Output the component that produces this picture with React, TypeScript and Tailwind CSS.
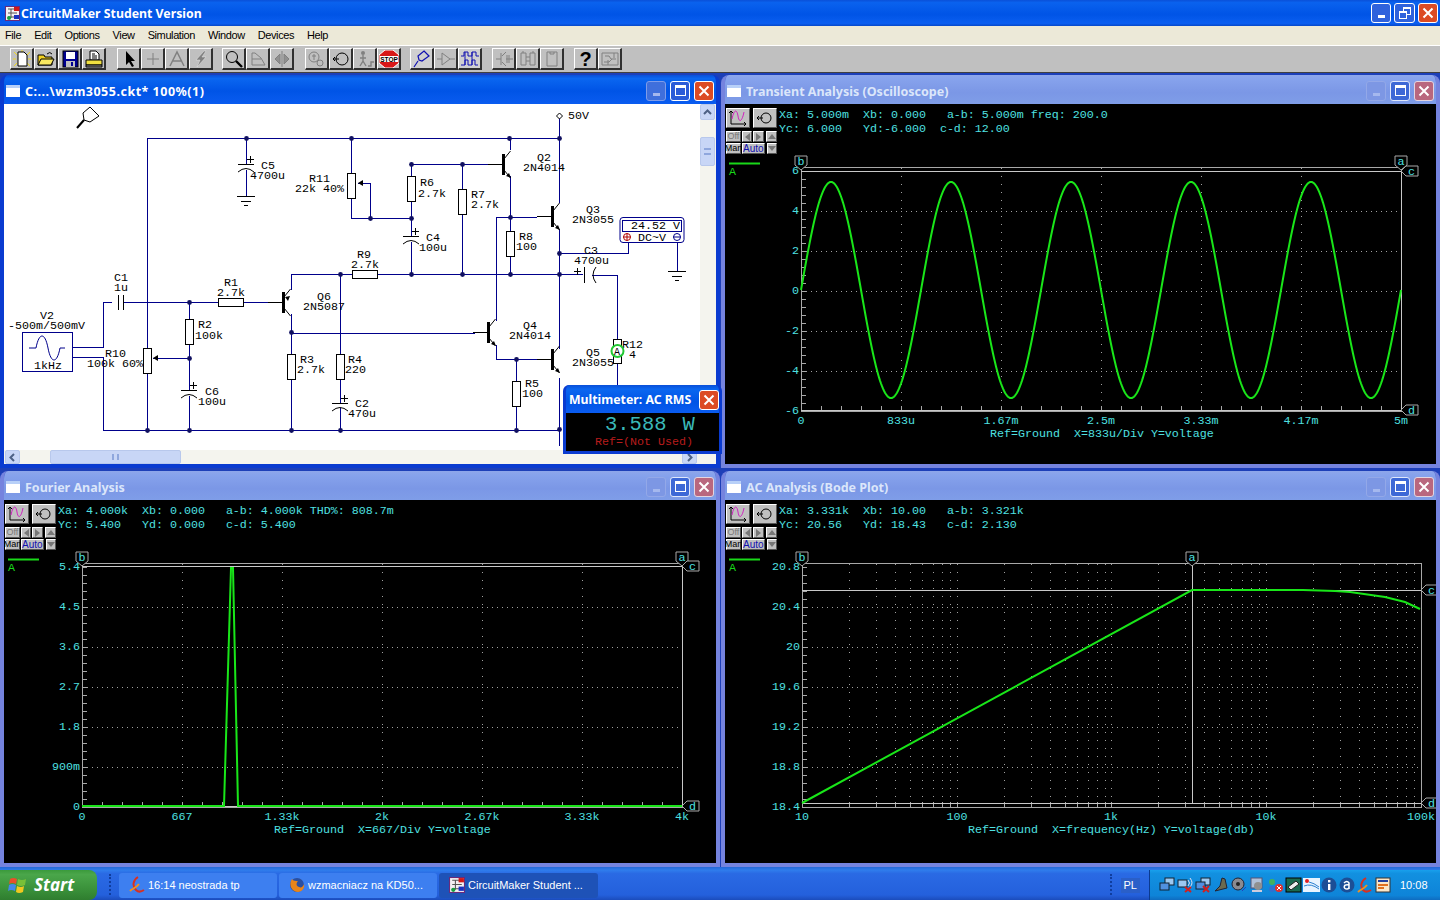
import React from 'react';

type Label = [number, number, string];

const WIRE = '#00008b';

// schematic, in page coordinates
const wires: string[] = [
  '147,348 147,138 559,138',
  '246,138 246,164', '246,170 246,196',
  '351,138 351,173', '351,197 351,218 411,218', '358,183 370,183 370,218',
  '411,164 488,164', '411,164 411,176', '411,201 411,236', '411,242 411,274',
  '462,164 462,190', '462,214 462,274',
  '510,138 510,150', '510,176 510,231', '510,256 510,274',
  '496,321 496,217 537,217', '559,116 559,203', '559,229 559,349', '559,378 559,446',
  '559,253 628,253 628,243',
  '377,274 583,274', '592,275 617,275 617,339', '617,363 617,386',
  '475,333 291,333', '496,345 496,359 537,359',
  '516,359 516,381', '516,406 516,430',
  '291,314 291,354', '291,379 291,430', '291,290 291,274 352,274',
  '340,274 340,354', '340,379 340,403', '340,408 340,430',
  '103,430 559,430', '147,373 147,430',
  '72,347 103,347 103,302 112,302', '72,357 103,357 103,430',
  '124,302 218,302', '243,302 269,302',
  '189,302 189,319', '189,344 189,390', '189,396 189,430', '153,358 189,358',
  '677,242 677,271',
];
const dots: [number, number][] = [
  [246, 138], [351, 138], [509, 138], [559, 138], [411, 164], [462, 164], [370, 218], [411, 218], [510, 217],
  [559, 253], [340, 274], [411, 274], [462, 274], [510, 274], [559, 274], [189, 302], [291, 332], [189, 358],
  [516, 359], [147, 430], [189, 430], [291, 430], [340, 430], [516, 430], [559, 429],
];
const vResistors: [number, number][] = [
  [351, 173], [411, 176], [462, 189], [510, 231], [189, 319], [291, 354], [340, 354], [516, 381], [147, 348],
];
const labels: Label[] = [
  [261, 169, 'C5'], [250, 179, '4700u'], [309, 182, 'R11'], [295, 192, '22k 40%'], [114, 281, 'C1'], [114, 291, '1u'],
  [40, 319, 'V2'], [8, 329, '-500m/500mV'], [34, 369, '1kHz'], [224, 286, 'R1'], [217, 296, '2.7k'],
  [317, 300, 'Q6'], [303, 310, '2N5087'], [198, 328, 'R2'], [195, 339, '100k'], [105, 357, 'R10'], [87, 367, '100k 60%'],
  [205, 395, 'C6'], [198, 405, '100u'], [300, 363, 'R3'], [297, 373, '2.7k'], [348, 363, 'R4'], [345, 373, '220'],
  [355, 407, 'C2'], [348, 417, '470u'], [357, 258, 'R9'], [351, 268, '2.7k'], [420, 186, 'R6'], [418, 197, '2.7k'],
  [471, 198, 'R7'], [471, 208, '2.7k'], [426, 241, 'C4'], [419, 251, '100u'], [537, 161, 'Q2'], [523, 171, '2N4014'],
  [519, 240, 'R8'], [516, 250, '100'], [586, 213, 'Q3'], [572, 223, '2N3055'], [584, 254, 'C3'], [574, 264, '4700u'],
  [568, 119, '50V'], [523, 329, 'Q4'], [509, 339, '2N4014'], [586, 356, 'Q5'], [572, 366, '2N3055'],
  [622, 348, 'R12'], [629, 358, '4'], [525, 387, 'R5'], [522, 397, '100'],
];

const Transistor = ({ x, y, pnp }: { x: number; y: number; pnp?: boolean }) => (
  <g>
    <line x1={x - 15} y1={y + 10.5} x2={x} y2={y + 10.5} stroke="#000" />
    <rect x={x - 1} y={y} width={3} height={21} fill="#000" />
    <path d={`M${x + 1} ${y + 5}L${x + 7.5} ${y - 3}M${x + 1} ${y + 16}L${x + 7.5} ${y + 24}`} stroke="#000" fill="none" />
    {pnp ? (
      <path d={`M${x + 2} ${y + 5}l5 -1l-2 5z`} fill="#000" />
    ) : (
      <path d={`M${x + 8} ${y + 24}l-5 -2l3 -3z`} fill="#000" />
    )}
  </g>
);

const PolarCap = ({ x, y }: { x: number; y: number }) => (
  <g stroke="#000" fill="none">
    <line x1={x - 8} y1={y + 0.5} x2={x + 8} y2={y + 0.5} />
    <path d={`M${x - 8} ${y + 8}Q${x} ${y + 1} ${x + 8} ${y + 8}`} />
    <path d={`M${x + 1} ${y - 4.5}h7M${x + 4.5} ${y - 8}v7`} />
  </g>
);

const Ground = ({ x, y }: { x: number; y: number }) => (
  <path d={`M${x - 9} ${y + 0.5}h18M${x - 5} ${y + 5.5}h10M${x - 2} ${y + 9.5}h4`} stroke="#000" />
);

const Schematic = () => (
  <svg width={696} height={346} viewBox="4 104 696 346" className="block font-['Liberation_Mono',monospace] text-[11.67px]">
    <rect x={4} y={104} width={696} height={346} fill="#fff" />
    {wires.map((w) => (
      <polyline key={w} points={w} fill="none" stroke={WIRE} strokeWidth={1} shapeRendering="crispEdges" />
    ))}
    {vResistors.map(([x, y]) => (
      <rect key={`${x}-${y}`} x={x - 3.5} y={y + 0.5} width={8} height={25} fill="#fff" stroke="#000" />
    ))}
    <rect x={218.5} y={298.5} width={25} height={8} fill="#fff" stroke="#000" />
    <rect x={352.5} y={270.5} width={25} height={8} fill="#fff" stroke="#000" />
    <rect x={613.5} y={339.5} width={8} height={24} fill="#fff" stroke="#000" />
    <path d="M153 358l5 -3v6z" fill="#000" />
    <path d="M358 183l5 -3v6z" fill="#000" />
    {dots.map(([x, y]) => (
      <circle key={`${x}:${y}`} cx={x + 0.5} cy={y + 0.5} r={2.4} fill="#101060" />
    ))}
    <Transistor x={283} y={292} pnp />
    <Transistor x={503} y={154} />
    <Transistor x={552} y={206} />
    <Transistor x={488} y={322} />
    <Transistor x={552} y={349} />
    <PolarCap x={246} y={164} />
    <PolarCap x={411} y={236} />
    <PolarCap x={189} y={390} />
    <PolarCap x={340} y={403} />
    <path d="M118.5 295v15M123.5 295v15" stroke="#000" />
    <path d="M584.5 267v16M596 267q-6 8 0 16M574 271.5h7M577.5 268v7" stroke="#000" fill="none" />
    <Ground x={246} y={196} />
    <Ground x={677} y={271} />
    <path d="M559.5 113l3 3l-3 3l-3 -3z" fill="#fff" stroke="#000" />
    <path d="M90 107l9 9l-9 6l-6 -2l-1 -7z" fill="#fff" stroke="#000" />
    <line x1={84} y1={120} x2={77} y2={128} stroke="#000" strokeWidth={2} />
    <rect x={22.5} y={332.5} width={50} height={39} fill="#fff" stroke={WIRE} />
    <path d="M29 348h7c3 -16 9 -16 12 0s9 16 12 0h5" fill="none" stroke={WIRE} />
    <rect x={620} y={217.5} width={64} height={25} rx={3} fill="#fff" stroke={WIRE} />
    <rect x={622.5} y={220.5} width={59} height={11} fill="#fff" stroke={WIRE} />
    <text x={631} y={229} fill="#000">24.52 V</text>
    <circle cx={627} cy={237} r={3.5} fill="none" stroke="#b00000" />
    <path d="M623.5 237h7M627 233.5v7" stroke="#b00000" />
    <text x={638} y={241} fill="#000">DC~V</text>
    <circle cx={677} cy={237} r={3.5} fill="none" stroke={WIRE} />
    <path d="M673.5 237h7" stroke={WIRE} />
    {labels.map(([x, y, s]) => (
      <text key={`${x}${y}${s}`} x={x} y={y} fill="#000">{s}</text>
    ))}
    <circle cx={617.5} cy={351} r={6} fill="#fff" stroke="#22c933" strokeWidth={2} />
    <text x={614} y={355} fill="#000" className="text-[10px]">A</text>
  </svg>
);

const CloseGlyph = () => (
  <svg width="12" height="12" viewBox="0 0 12 12"><path d="M1.5 1.5l9 9M10.5 1.5l-9 9" stroke="#fff" strokeWidth="2" /></svg>
);

const TitleButtons = ({ active }: { active?: boolean }) => (
  <div className="ml-auto flex gap-1 pr-[6px]">
    <div className={`flex h-5 w-5 items-end justify-center rounded-[3px] border pb-[4px] ${active ? 'border-[#7f9ce8] bg-[#3f6fdc]' : 'border-[#93a8e8] bg-[#7d97e4]'}`}>
      <div className="h-[3px] w-[7px] bg-[#a5b8ee]" />
    </div>
    <div className={`flex h-5 w-5 items-center justify-center rounded-[3px] border ${active ? 'border-white bg-[#2b5bd8]' : 'border-[#dfe7fb] bg-[#3d68d6]'}`}>
      <div className="h-[11px] w-[11px] border border-t-[3px] border-white" />
    </div>
    <div className={`flex h-5 w-5 items-center justify-center rounded-[3px] border ${active ? 'border-white bg-[#dc4b24]' : 'border-[#e4d5e0] bg-[#b9677e]'}`}>
      <CloseGlyph />
    </div>
  </div>
);

const MdiWindow = ({ title, active, children }: { title: string; active?: boolean; children: React.ReactNode }) => (
  <div className={`flex min-h-0 flex-col overflow-hidden rounded-t-lg border-x-4 border-b-4 ${active ? 'border-[#0a3bd0]' : 'border-[#7583de]'}`}>
    <div className={`-mx-1 flex h-[29px] shrink-0 items-center pl-[6px] pt-[2px] ${active ? 'bg-[linear-gradient(180deg,#0a4fd8_0%,#0a66f0_12%,#0054e6_55%,#0a5cf0_100%)]' : 'bg-[linear-gradient(180deg,#8ea6ea_0%,#86a2ec_15%,#7b97e6_60%,#7f9de8_100%)]'}`}>
      <div className="mr-[5px] h-3 w-[14px] border-t-[3px] border-[#b8d0f8] bg-white" />
      <span className={`pt-[3px] font-['Noto_Sans',sans-serif] text-[12.5px] font-bold ${active ? 'tracking-[0.5px] text-white' : 'text-[#dbe6fa]'}`}>{title}</span>
      <TitleButtons active={active} />
    </div>
    {children}
  </div>
);

const smallBtn = 'flex items-center justify-center border border-t-white border-l-white border-r-[#555] border-b-[#555] bg-[#c0c0c0]';

const Toolbox = () => (
  <div className="w-[52px] shrink-0 pl-px pt-1">
    <div className="flex justify-between">
      <div className={`h-5 w-6 ${smallBtn}`}>
        <svg width="20" height="17" viewBox="0 0 20 17">
          <path d="M3 1v13h15M1 3l2 -2l2 2M16 12l2 2l-2 2" fill="none" stroke="#000" />
          <path d="M4 9c2 -10 5 -10 6 -3s4 6 6 -4" fill="none" stroke="#d020c0" />
        </svg>
      </div>
      <div className={`h-5 w-6 ${smallBtn}`}>
        <svg width="18" height="14" viewBox="0 0 18 14">
          <circle cx="10" cy="7" r="5" fill="none" stroke="#000" />
          <path d="M1 7h6M3 5l-2 2l2 2" fill="none" stroke="#000" />
        </svg>
      </div>
    </div>
    <div className="mt-[3px] flex h-[11px] gap-px">
      <div className={`w-[15px] font-['Liberation_Sans',sans-serif] text-[9px] leading-none text-[#777] ${smallBtn}`}>Off</div>
      <div className={`w-[11px] ${smallBtn}`}><div className="h-0 w-0 border-y-[4px] border-r-[5px] border-y-transparent border-r-[#777]" /></div>
      <div className={`w-[11px] ${smallBtn}`}><div className="h-0 w-0 border-y-[4px] border-l-[5px] border-y-transparent border-l-[#777]" /></div>
      <div className={`ml-px w-[11px] ${smallBtn}`}><div className="h-0 w-0 border-x-[4px] border-b-[5px] border-x-transparent border-b-[#777]" /></div>
    </div>
    <div className="mt-px flex h-[11px] gap-px">
      <div className={`w-[15px] font-['Liberation_Sans',sans-serif] text-[9px] leading-none text-black ${smallBtn}`}>Man</div>
      <div className={`w-[23px] font-['Liberation_Sans',sans-serif] text-[10px] leading-none text-[#1010b0] ${smallBtn}`}>Auto</div>
      <div className={`ml-px w-[11px] ${smallBtn}`}><div className="h-0 w-0 border-x-[4px] border-t-[5px] border-x-transparent border-t-[#777]" /></div>
    </div>
  </div>
);

const Readout = ({ top, bottom }: { top: string; bottom: string }) => (
  <div className="ml-[2px] whitespace-pre pt-1 font-['Liberation_Mono',monospace] text-[11.67px] leading-[14px] text-[#4fe0e0]">
    <div>{top}</div>
    <div>{bottom}</div>
  </div>
);

const MarkerDown = ({ x, y, c }: { x: number; y: number; c: string }) => (
  <g>
    <path d={`M${x - 6} ${y - 14}h12v9l-6 5l-6 -5z`} fill="#000" stroke="#a8a8a8" />
    <text x={x} y={y - 5} textAnchor="middle" fill="#4fe0e0">{c}</text>
  </g>
);
const MarkerLeft = ({ x, y, c }: { x: number; y: number; c: string }) => (
  <g>
    <path d={`M${x} ${y}l5 -5h12v10h-12z`} fill="#000" stroke="#a8a8a8" />
    <text x={x + 7} y={y + 4} fill="#4fe0e0">{c}</text>
  </g>
);

interface ChartProps {
  x0: number;
  y0: number;
  w: number;
  l: number;
  r: number;
  t: number;
  yLabels: string[];
  xLabels: [string, number][];
  footer: string;
  footerX: number;
  vGrid: number[];
  bTicks: number[];
  a: number;
  c: number;
  d: number;
  children: React.ReactNode;
}

const Chart = ({ x0, y0, w, l, r, t, yLabels, xLabels, footer, footerX, vGrid, bTicks, a, c, d, children }: ChartProps) => {
  const b = t + 240;
  const rows = yLabels.map((_, i) => t + i * 40);
  const ticks = Array.from({ length: 30 }, (_, i) => t + i * 8);
  return (
    <svg width={w} height={310} viewBox={`${x0} ${y0} ${w} 310`} className="block font-['Liberation_Mono',monospace] text-[11.67px]">
      <line x1={x0 + 4} y1={y0 + 9.5} x2={x0 + 35} y2={y0 + 9.5} stroke="#19d819" strokeWidth={2} />
      <text x={x0 + 4} y={y0 + 21} fill="#19d819">A</text>
      <g shapeRendering="crispEdges">
        {vGrid.map((x) => (
          <line key={x} x1={x} y1={t - 3} x2={x} y2={b} stroke="#a0a0a0" strokeDasharray="1 7" />
        ))}
        {rows.slice(1, -1).map((y) => (
          <line key={y} x1={l} y1={y} x2={r} y2={y} stroke="#a0a0a0" strokeDasharray="1 4" />
        ))}
        <rect x={l} y={t - 4} width={r - l} height={244} fill="none" stroke="#a8a8a8" />
        {ticks.map((y) => (
          <line key={y} x1={l} y1={y} x2={l + 5} y2={y} stroke="#a8a8a8" />
        ))}
        {bTicks.map((x) => (
          <line key={x} x1={x} y1={b} x2={x} y2={b - 5} stroke="#a8a8a8" />
        ))}
        <line x1={a} y1={t - 4} x2={a} y2={d} stroke="#c8c8c8" />
        <line x1={l} y1={c} x2={r} y2={c} stroke="#c8c8c8" />
        <line x1={l} y1={d} x2={r} y2={d} stroke="#c8c8c8" />
      </g>
      {children}
      <MarkerDown x={l} y={t - 1} c="b" />
      <MarkerDown x={a} y={t - 1} c="a" />
      <MarkerLeft x={r} y={c} c="c" />
      <MarkerLeft x={r} y={d} c="d" />
      {yLabels.map((s, i) => (
        <text key={s} x={l - 2} y={rows[i] + 3} textAnchor="end" fill="#4fe0e0">{s}</text>
      ))}
      {xLabels.map(([s, x]) => (
        <text key={s} x={x} y={b + 13} textAnchor="middle" fill="#4fe0e0">{s}</text>
      ))}
      <text x={footerX} y={b + 26} fill="#4fe0e0" xmlSpace="preserve">{footer}</text>
    </svg>
  );
};

const sinePoints = Array.from({ length: 601 }, (_, i) => `${801 + i},${(290 - 108 * Math.sin((i / 120) * 2 * Math.PI)).toFixed(1)}`).join(' ');

const decades = [802, 957, 1111, 1266];
const logGrid = decades.flatMap((d) => [2, 3, 4, 5, 6, 7, 8, 9].map((k) => Math.round(d + Math.log10(k) * 154.75)));

const range = (from: number, to: number, step: number) => {
  const out: number[] = [];
  for (let v = from; v <= to; v += step) out.push(v);
  return out;
};

const PlotPanel = ({ top, bottom, children }: { top: string; bottom: string; children: React.ReactNode }) => (
  <div className="min-h-0 flex-1 overflow-hidden bg-black">
    <div className="flex h-[50px]">
      <Toolbox />
      <Readout top={top} bottom={bottom} />
    </div>
    {children}
  </div>
);

const ScrollArrow = ({ d }: { d: string }) => (
  <svg width="9" height="9" viewBox="0 0 9 9"><path d={d} fill="none" stroke="#4d6185" strokeWidth="2" /></svg>
);

const scrollBtn = 'flex items-center justify-center rounded-[2px] border border-[#b8c8ec] bg-[#c8d6f6]';

const SchematicWindow = () => (
  <MdiWindow title="C:...\wzm3055.ckt* 100%(1)" active>
    <div className="flex min-h-0 flex-1 bg-white">
      <Schematic />
      <div className="flex w-4 flex-col bg-[#f4f4ee]">
        <div className={`h-4 w-[15px] ${scrollBtn}`}><ScrollArrow d="M1 6l3.5 -3.5l3.5 3.5" /></div>
        <div className={`mt-[17px] h-[29px] w-[15px] ${scrollBtn}`}>
          <div className="h-[7px] w-[7px] border-y-2 border-[#8fa7dd]" />
        </div>
      </div>
    </div>
    <div className="flex h-[14px] shrink-0 items-stretch bg-[#f4f4ee]">
      <div className={`ml-px w-[15px] ${scrollBtn}`}><ScrollArrow d="M6 1l-3.5 3.5l3.5 3.5" /></div>
      <div className={`ml-[30px] w-[131px] ${scrollBtn}`}>
        <div className="h-[6px] w-[7px] border-x-2 border-[#8fa7dd]" />
      </div>
      <div className={`ml-auto mr-[19px] w-[15px] ${scrollBtn}`}><ScrollArrow d="M3 1l3.5 3.5l-3.5 3.5" /></div>
    </div>
  </MdiWindow>
);

const Multimeter = () => (
  <div className="absolute left-[563px] top-[312px] flex h-[69px] w-[159px] flex-col overflow-hidden rounded-t-md border-x-[3px] border-b-[3px] border-[#0a3bd0] bg-[#0a3bd0]">
    <div className="-mx-[3px] flex h-[28px] shrink-0 items-center bg-[linear-gradient(180deg,#0a4fd8_0%,#0a66f0_15%,#0054e6_60%,#0a5cf0_100%)] pl-[6px]">
      <span className="pt-[3px] font-['Noto_Sans',sans-serif] text-[12.3px] font-bold text-white">Multimeter: AC RMS</span>
      <div className="ml-auto mr-[3px] mt-px flex h-5 w-5 items-center justify-center rounded-[3px] border border-white bg-[#dc4b24]">
        <CloseGlyph />
      </div>
    </div>
    <div className="min-h-0 flex-1 bg-black font-['Liberation_Mono',monospace]">
      <div className="flex h-[22px] pl-[39px] text-[20.5px] leading-[24px] text-[#3ab8b8]">
        <span>3.588</span>
        <span className="ml-[16px]">W</span>
      </div>
      <div className="whitespace-pre pl-[29px] text-[11.67px] leading-[14px] text-[#b81c1c]">Ref=(Not Used)</div>
    </div>
  </div>
);

const menuItems = ['File', 'Edit', 'Options', 'View', 'Simulation', 'Window', 'Devices', 'Help'];

const AppIcon = ({ size = 15 }: { size?: number }) => (
  <svg width={size} height={size} viewBox="0 0 15 15">
    <rect x="0.5" y="0.5" width="14" height="14" fill="#f4f0f4" stroke="#6a2a7a" />
    <path d="M3 3h9M3 7h9M3 11h9M6 3v9" stroke="#555" />
    <rect x="9" y="1" width="5" height="4" fill="#d01818" />
    <rect x="9" y="9" width="5" height="4" fill="#1830c0" />
    <circle cx="4" cy="12" r="2" fill="#18a040" />
  </svg>
);

const ToolBtn = ({ children, pressed }: { children: React.ReactNode; pressed?: boolean }) => (
  <div className={`flex h-[22px] w-[24px] items-center justify-center border border-r-2 border-b-2 border-t-white border-l-white border-r-[#303030] border-b-[#303030] ${pressed ? 'bg-[#d0d0d0]' : 'bg-[#c0c0c0]'}`}>
    <svg width="20" height="18" viewBox="0 0 20 18">{children}</svg>
  </div>
);

const G = '#808080';
const gray = { fill: 'none', stroke: G };

const Toolbar = () => (
  <div className="flex h-[27px] shrink-0 items-center border-b border-[#404040] bg-[#c0c0c0] pl-[10px]">
    <div className="flex">
      <ToolBtn>
        <path d="M2 2l3 3M18 2l-3 3M2 16l3 -3M18 16l-3 -3M1 9h3M16 9h3M10 0v2" stroke="#f0d820" />
        <path d="M6 2h6l3 3v11H6z" fill="#fff" stroke="#000" />
      </ToolBtn>
      <ToolBtn>
        <path d="M2 5h6l1 2h7v8H2z" fill="#f0d020" stroke="#000" />
        <path d="M2 15l3 -6h13l-3 6z" fill="#f8e860" stroke="#000" />
        <path d="M11 4q3 -3 5 0" fill="none" stroke="#000" />
      </ToolBtn>
      <ToolBtn>
        <rect x="3" y="1" width="15" height="16" fill="#000090" stroke="#000" />
        <rect x="6" y="2" width="9" height="7" fill="#fff" />
        <rect x="6" y="11" width="9" height="6" fill="#c0c0c0" />
        <rect x="11" y="12" width="2" height="4" fill="#000090" />
      </ToolBtn>
      <ToolBtn>
        <path d="M6 1h6l3 3v6H6z" fill="#fff" stroke="#000" />
        <path d="M8 4h3M8 6h5M8 8h5" stroke="#000" />
        <path d="M2 10h16v5H2z" fill="#f0e040" stroke="#000" />
        <path d="M2 15h16v2H2z" fill="#909090" stroke="#000" />
      </ToolBtn>
    </div>
    <div className="ml-[11px] flex">
      <ToolBtn><path d="M7 1v14l3 -3l3 5l2 -1l-3 -5h4z" fill="#000" /></ToolBtn>
      <ToolBtn><path d="M10 3v12M4 9h12" {...gray} /></ToolBtn>
      <ToolBtn><path d="M3 16L10 2l7 14M6 11h8" {...gray} strokeWidth={1.5} /></ToolBtn>
      <ToolBtn><path d="M13 1L5 10h4l-3 7l9 -10h-4l4 -6z" fill="#808080" stroke="#e4e4e4" strokeWidth={0.5} /></ToolBtn>
    </div>
    <div className="ml-[9px] flex">
      <ToolBtn>
        <circle cx="8" cy="7" r="5.5" fill="none" stroke="#000" />
        <path d="M12 11l6 6" stroke="#000" strokeWidth={2.4} />
      </ToolBtn>
      <ToolBtn><path d="M4 15V3h3l6 5l4 7zM4 9h9" {...gray} /></ToolBtn>
      <ToolBtn><path d="M8 4L3 9l5 5zM12 4l5 5l-5 5zM10 1v16" fill="#909090" stroke={G} /></ToolBtn>
    </div>
    <div className="ml-[11px] flex">
      <ToolBtn><circle cx="7" cy="7" r="5" {...gray} /><circle cx="13" cy="13" r="3" {...gray} /><path d="M7 4v6M5 6h4" {...gray} /></ToolBtn>
      <ToolBtn><circle cx="11" cy="9" r="6" fill="none" stroke="#000" /><path d="M2 9h6M4 7l-2 2l2 2" fill="none" stroke="#000" /></ToolBtn>
      <ToolBtn>
        <circle cx="8" cy="3" r="2" fill="#808080" />
        <path d="M8 5v6l-3 5M8 11l3 5M5 8h6M13 16h3v-4h3" {...gray} strokeWidth={1.4} />
      </ToolBtn>
      <ToolBtn>
        <path d="M6 0h8l6 5v8l-6 5H6l-6 -5V5z" fill="#d81818" stroke="#fff" />
        <rect x="1" y="6" width="18" height="6" fill="#fff" />
        <text x="10" y="11.5" textAnchor="middle" fontSize="6.5" fontWeight="700" fontFamily="Liberation Sans, sans-serif" fill="#000">STOP</text>
      </ToolBtn>
    </div>
    <div className="ml-[9px] flex">
      <ToolBtn pressed>
        <path d="M12 1l5 5l-7 5l-3 -1l-1 -4zM6 11l-4 6" fill="none" stroke="#1010b0" strokeWidth={1.2} />
      </ToolBtn>
      <ToolBtn><path d="M1 9h5M6 3v12l8 -6zM14 9h5" {...gray} /></ToolBtn>
      <ToolBtn pressed>
        <path d="M1 6h3V2h4v4h4V2h4v4h3M1 15h4v-5h3v5h4v-5h3v5h3M5 2v13M12 2v13" fill="none" stroke="#1010b0" />
      </ToolBtn>
    </div>
    <div className="ml-[10px] flex">
      <ToolBtn><path d="M2 9h5M7 3v12M8 6l4 -4M8 12l4 4M12 9h7M13 5v8M15 5v8" {...gray} /></ToolBtn>
      <ToolBtn><path d="M3 3h5v12H3zM12 3h5v12h-5zM8 7h4M8 11h4M5 1v2M15 1v2" {...gray} /></ToolBtn>
      <ToolBtn><path d="M5 2h10v14H5zM8 2v2h4V2" {...gray} /></ToolBtn>
    </div>
    <div className="ml-[10px] flex">
      <div className="flex h-[22px] w-[24px] items-center justify-center border border-r-2 border-b-2 border-t-white border-l-white border-r-[#303030] border-b-[#303030] font-['Liberation_Sans',sans-serif] text-[20px] font-bold leading-none text-black">?</div>
      <ToolBtn><path d="M2 3h16v12H2zM5 6h4l2 3h5M4 12h5l3 -3M14 3v5M8 10v5" {...gray} /></ToolBtn>
    </div>
  </div>
);

const TrayIcon = ({ children }: { children: React.ReactNode }) => (
  <svg width="17" height="16" viewBox="0 0 17 16" className="mr-px shrink-0">{children}</svg>
);

const Taskbar = () => (
  <div className="flex h-[33px] shrink-0 items-end bg-[linear-gradient(180deg,#2468d8_0%,#2f7cec_10%,#2a6ae4_20%,#2460dc_85%,#1b4cbc_100%)]">
    <div className="flex h-[30px] w-[97px] items-center rounded-r-lg bg-[linear-gradient(180deg,#3b9a3b_0%,#4aa64a_15%,#388e38_70%,#2f7d2f_100%)] pl-2">
      <svg width="20" height="18" viewBox="0 0 20 18">
        <path d="M2 3q3 -2 7 0l-1 5q-4 -2 -7 0z" fill="#e8502a" />
        <path d="M10 3q4 2 8 0l-1 6q-4 2 -8 0z" fill="#78c038" />
        <path d="M1 9q3 -2 7 0l-1 6q-4 -2 -7 0z" fill="#4488e8" />
        <path d="M9 10q4 2 7 0l-1 6q-4 2 -7 0z" fill="#f0c820" />
      </svg>
      <span className="ml-[6px] font-['Noto_Sans',sans-serif] text-[17px] font-bold italic text-white">Start</span>
    </div>
    <div className="ml-[12px] mr-[7px] mb-[5px] h-[21px] w-[3px] border-l-2 border-dotted border-[#0f3d9e]" />
    <div className="flex h-[30px] items-center gap-[2px] pb-[2px] pt-[2px] font-['Liberation_Sans',sans-serif] text-[11px] text-white">
      <div className="flex h-[25px] w-[158px] items-center rounded-[3px] bg-[#3d7ff0] pl-[9px]">
        <svg width="18" height="18" viewBox="0 0 18 18">
          <path d="M10 1c-5 3 -6 9 -2 13c2 2 5 2 8 0" fill="none" stroke="#d83020" strokeWidth="2" />
          <path d="M2 15c3 -3 6 -3 9 -7" fill="none" stroke="#f09020" strokeWidth="2" />
        </svg>
        <span className="ml-[2px]">16:14 neostrada tp</span>
      </div>
      <div className="flex h-[25px] w-[158px] items-center rounded-[3px] bg-[#3d7ff0] pl-[9px]">
        <svg width="18" height="18" viewBox="0 0 18 18">
          <circle cx="9" cy="9" r="7" fill="#2a4fa0" />
          <path d="M4 3c-4 6 0 13 6 13c4 0 7 -4 6 -8c-1 3 -3 4 -5 3c-3 -1 -3 -4 -1 -6c-2 0 -5 0 -6 -2z" fill="#e8851a" />
        </svg>
        <span className="ml-[2px]">wzmacniacz na KD50...</span>
      </div>
      <div className="flex h-[25px] w-[159px] items-center rounded-[3px] bg-[#1e52b7] pl-[10px]">
        <AppIcon size={16} />
        <span className="ml-[3px]">CircuitMaker Student ...</span>
      </div>
    </div>
    <div className="ml-auto mb-[5px] mr-[8px] h-[21px] w-[3px] border-l-2 border-dotted border-[#0f3d9e]" />
    <div className="mb-[7px] mr-[9px] bg-[#2a5fc8] px-[3px] font-['Liberation_Sans',sans-serif] text-[11px] leading-[15px] text-white">PL</div>
    <div className="flex h-[30px] w-[291px] items-center border-l border-[#0a3a90] bg-[linear-gradient(180deg,#18a0ec_0%,#1290e0_12%,#0e84d8_85%,#0f6cc0_100%)] pl-[9px] font-['Liberation_Sans',sans-serif] text-[11px] text-white">
      <TrayIcon><rect x="6" y="1" width="9" height="7" fill="#9cc8f0" stroke="#123" /><rect x="1" y="6" width="9" height="7" fill="#5090e0" stroke="#123" /></TrayIcon>
      <TrayIcon><rect x="1" y="3" width="9" height="7" fill="#9cc8f0" stroke="#123" /><path d="M11 3q3 3 0 6M13 1q4 5 0 9" fill="none" stroke="#dde" /><path d="M8 10l6 5M14 10l-6 5" stroke="#d02020" strokeWidth="2" /></TrayIcon>
      <TrayIcon><rect x="6" y="1" width="9" height="7" fill="#9cc8f0" stroke="#123" /><rect x="1" y="5" width="9" height="7" fill="#5090e0" stroke="#123" /><path d="M8 9l6 6M14 9l-6 6" stroke="#d02020" strokeWidth="2" /></TrayIcon>
      <TrayIcon><path d="M9 1l3 1l2 9l-12 3l5 -5z" fill="#6a6a50" stroke="#223" /></TrayIcon>
      <TrayIcon><circle cx="7" cy="7" r="6" fill="#8a8a90" stroke="#223" /><circle cx="7" cy="7" r="2" fill="#222" /><path d="M11 14l4 -4" stroke="#2040c0" /></TrayIcon>
      <TrayIcon><rect x="2" y="1" width="11" height="10" fill="#b0c0d8" stroke="#557" /><circle cx="9" cy="9" r="4" fill="#909090" /><path d="M3 14h10" stroke="#ccd" strokeWidth="2" /></TrayIcon>
      <TrayIcon><circle cx="5" cy="5" r="3" fill="#40b060" /><circle cx="5" cy="12" r="3" fill="#3070d0" /><circle cx="12" cy="11" r="4" fill="#e03030" /><path d="M10 9l4 4M14 9l-4 4" stroke="#fff" /></TrayIcon>
      <TrayIcon><rect x="1" y="1" width="15" height="14" fill="#1a6a50" stroke="#000" /><path d="M3 10l8 -6l3 3l-8 6z" fill="#eee" stroke="#222" /></TrayIcon>
      <TrayIcon><rect x="0" y="1" width="17" height="14" fill="#e8f4ff" /><circle cx="4" cy="4" r="2" fill="#e02020" /><path d="M1 9q7 -3 15 3M6 5q5 1 10 5" fill="none" stroke="#2a80d0" /></TrayIcon>
      <TrayIcon><circle cx="8" cy="8" r="7.5" fill="#1c4e96" /><rect x="7" y="3" width="2.4" height="2.4" fill="#fff" /><rect x="7" y="7" width="2.4" height="6" fill="#fff" /></TrayIcon>
      <TrayIcon><circle cx="8" cy="8" r="7.5" fill="#1c4e96" /><path d="M5 6q3 -3 5 0v6M10 8c-6 -1 -6 4 -2 4q2 0 2 -2" fill="none" stroke="#fff" strokeWidth="1.5" /></TrayIcon>
      <TrayIcon><path d="M9 1c-5 3 -6 8 -3 12c2 2 5 2 8 0" fill="none" stroke="#d83020" strokeWidth="2" /><path d="M1 15c3 -3 6 -3 9 -7" fill="none" stroke="#f09020" strokeWidth="2" /></TrayIcon>
      <TrayIcon><rect x="1" y="1" width="14" height="14" fill="#fbe6c8" stroke="#333" /><path d="M3 4h10" stroke="#2040a0" strokeWidth="2" /><path d="M3 8h10M3 11h6" stroke="#e07020" strokeWidth="2" /></TrayIcon>
      <span className="ml-[7px]">10:08</span>
    </div>
  </div>
);

export default function App() {
  return (
    <div className="flex h-[900px] w-[1440px] flex-col overflow-hidden bg-[#1d3fb8]">
      <div className="flex h-[26px] shrink-0 items-center bg-[linear-gradient(180deg,#0a50d8_0%,#0a62ee_10%,#0054e6_55%,#0a5ef0_90%,#0648c8_100%)] pl-[5px]">
        <AppIcon />
        <span className="ml-[1px] pt-[2px] font-['Noto_Sans',sans-serif] text-[12.3px] font-bold text-white">CircuitMaker Student Version</span>
        <div className="ml-auto flex gap-[3px] pr-[2px]">
          <div className="flex h-5 w-5 items-end justify-center rounded-[3px] border border-white bg-[#2f62dc] pb-[4px]">
            <div className="h-[3px] w-[7px] bg-white" />
          </div>
          <div className="relative h-5 w-[21px] rounded-[3px] border border-white bg-[#2f62dc]">
            <div className="absolute left-[8px] top-[3px] h-[8px] w-[8px] border border-t-2 border-white" />
            <div className="absolute left-[4px] top-[7px] h-[8px] w-[8px] border border-t-2 border-white bg-[#2f62dc]" />
          </div>
          <div className="flex h-5 w-5 items-center justify-center rounded-[3px] border border-white bg-[#dc4b24]">
            <CloseGlyph />
          </div>
        </div>
      </div>
      <div className="flex h-[19px] shrink-0 items-center gap-[13px] bg-[#ece9d8] pl-[5px] font-['Liberation_Sans',sans-serif] text-[11px] tracking-[-0.4px] text-black">
        {menuItems.map((m) => (
          <span key={m}>{m}</span>
        ))}
      </div>
      <div className="h-px shrink-0 bg-white" />
      <Toolbar />
      <div className="relative grid min-h-0 flex-1 grid-cols-[720px_719px] grid-rows-[393px_396px] gap-x-px gap-y-[3px] pt-[2px]">
        <SchematicWindow />
        <MdiWindow title="Transient Analysis (Oscilloscope)">
          <PlotPanel top="Xa: 5.000m  Xb: 0.000   a-b: 5.000m freq: 200.0" bottom="Yc: 6.000   Yd:-6.000  c-d: 12.00">
            <Chart
              x0={725} y0={154} w={711} l={801} r={1401} t={171}
              yLabels={['6', '4', '2', '0', '-2', '-4', '-6']}
              xLabels={[['0', 801], ['833u', 901], ['1.67m', 1001], ['2.5m', 1101], ['3.33m', 1201], ['4.17m', 1301], ['5m', 1401]]}
              footer="Ref=Ground  X=833u/Div Y=voltage" footerX={990}
              vGrid={[901, 1001, 1101, 1201, 1301]} bTicks={range(801, 1401, 20)}
              a={1401} c={171} d={410}
            >
              <polyline points={sinePoints} fill="none" stroke="#19e619" strokeWidth={2} />
            </Chart>
          </PlotPanel>
        </MdiWindow>
        <MdiWindow title="Fourier Analysis">
          <PlotPanel top="Xa: 4.000k  Xb: 0.000   a-b: 4.000k THD%: 808.7m" bottom="Yc: 5.400   Yd: 0.000   c-d: 5.400">
            <Chart
              x0={4} y0={550} w={712} l={82} r={682} t={567}
              yLabels={['5.4', '4.5', '3.6', '2.7', '1.8', '900m', '0']}
              xLabels={[['0', 82], ['667', 182], ['1.33k', 282], ['2k', 382], ['2.67k', 482], ['3.33k', 582], ['4k', 682]]}
              footer="Ref=Ground  X=667/Div Y=voltage" footerX={274}
              vGrid={[182, 282, 382, 482, 582]} bTicks={range(82, 682, 20)}
              a={682} c={566} d={806}
            >
              <polyline points="82,806 224,806 231,568 233,568 238,806 682,806" fill="none" stroke="#19e619" strokeWidth={2} />
            </Chart>
          </PlotPanel>
        </MdiWindow>
        <MdiWindow title="AC Analysis (Bode Plot)">
          <PlotPanel top="Xa: 3.331k  Xb: 10.00   a-b: 3.321k" bottom="Yc: 20.56   Yd: 18.43   c-d: 2.130">
            <Chart
              x0={725} y0={550} w={711} l={802} r={1421} t={567}
              yLabels={['20.8', '20.4', '20', '19.6', '19.2', '18.8', '18.4']}
              xLabels={[['10', 802], ['100', 957], ['1k', 1111], ['10k', 1266], ['100k', 1421]]}
              footer="Ref=Ground  X=frequency(Hz) Y=voltage(db)" footerX={968}
              vGrid={[...decades, ...logGrid]} bTicks={[...decades, ...logGrid]}
              a={1192} c={590} d={803}
            >
              <polyline points="802,803 1192,590 1303,590 1335,591 1350,592 1385,597 1405,602 1420,609" fill="none" stroke="#19e619" strokeWidth={2} />
            </Chart>
          </PlotPanel>
        </MdiWindow>
        <Multimeter />
      </div>
      <Taskbar />
    </div>
  );
}
